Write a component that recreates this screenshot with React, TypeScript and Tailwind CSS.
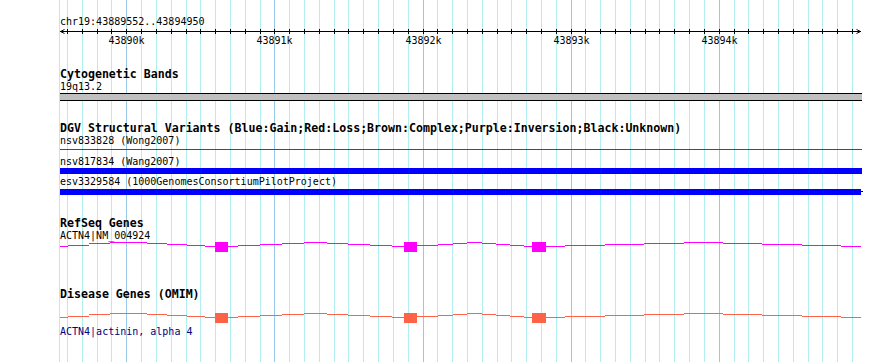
import React from "react";

const W = 890;
const px = (bp: number) => Math.floor(126.8 + (bp - 43890000) * 0.1481);

const minor: number[] = [];
for (let bp = 43889600; bp <= 43894900; bp += 100) minor.push(bp);
const majors = [43890000, 43891000, 43892000, 43893000, 43894000];

const segs: [number, number, number][] = [
  [60, 68, 246], [68, 89, 245], [89, 110, 243], [110, 147, 242], [147, 167, 243], [167, 187, 244], [187, 205, 245], [205, 215, 246],
  [228, 238, 246], [238, 260, 245], [260, 282, 244], [282, 304, 243], [304, 327, 242], [327, 348, 243], [348, 370, 244], [370, 392, 245], [392, 404, 246],
  [417, 438, 245], [438, 453, 244], [453, 467, 243], [467, 482, 242], [482, 496, 243], [496, 510, 244], [510, 524, 245], [524, 532, 246],
  [546, 565, 246], [565, 605, 245], [605, 644, 244], [644, 684, 243], [684, 723, 242], [723, 762, 243], [762, 802, 244], [802, 841, 245], [841, 861, 246],
];
const exons: [number, number][] = [[215, 228], [404, 417], [532, 546]];

function Gene({ color, h, lineOff, boxTop }: { color: string; h: number; lineOff: number; boxTop: number }) {
  return (
    <svg width={W} height={h} className="block" shapeRendering="crispEdges">
      {segs.map(([a, b, y], i) => (
        <rect key={i} x={a} y={y - lineOff} width={b - a} height={1} fill={color} />
      ))}
      {exons.map(([a, b], i) => (
        <rect key={"e" + i} x={a} y={boxTop} width={b - a} height={10} fill={color} />
      ))}
    </svg>
  );
}

const small = "h-[12px] leading-[11px] text-[10px] pl-[60px] whitespace-pre text-black";
const bold = "h-[13px] leading-[13px] text-[11.6px] font-bold pl-[60px] whitespace-pre text-black";

export default function App() {
  return (
    <div className="relative w-[890px] h-[362px] overflow-hidden bg-white font-['DejaVu_Sans_Mono',monospace]">
      <svg width={W} height={362} className="absolute inset-0" shapeRendering="crispEdges">
        <rect x={59} y={0} width={1} height={362} fill="#b0eef0" />
        {minor.map((bp) => (
          <rect key={bp} x={px(bp)} y={0} width={1} height={362} fill={bp % 1000 === 0 ? "#98c8e6" : "#b0eef0"} />
        ))}
      </svg>
      <div className="relative flex flex-col">
        <div className="h-[16px]" />
        <div className={small}>chr19:43889552..43894950</div>
        <svg width={W} height={20} className="block">
          <g shapeRendering="crispEdges">
            <rect x={60} y={3} width={801} height={1} fill="#000" />
            {minor.map((bp) => (
              <rect key={bp} x={px(bp)} y={1} width={1} height={5} fill="#000" />
            ))}
          </g>
          <path d="M64.5 1.5 L60.5 3.5 L64.5 5.5" fill="none" stroke="#000" strokeWidth={1} />
          <path d="M856.5 1.5 L860.5 3.5 L856.5 5.5" fill="none" stroke="#000" strokeWidth={1} />
          {majors.map((bp) => (
            <text key={bp} x={px(bp) + 0.5} y={16} textAnchor="middle" fontSize={10} fontFamily="DejaVu Sans Mono, monospace" fill="#000">
              {bp / 1000 + "k"}
            </text>
          ))}
        </svg>
        <div className="h-[20px]" />
        <div className={bold}>Cytogenetic Bands</div>
        <div className={small}>19q13.2</div>
        <svg width={W} height={8} className="block" shapeRendering="crispEdges">
          <rect x={60} y={0} width={802} height={8} fill="#000" />
          <rect x={60} y={1} width={802} height={6} fill="#c0c0c0" />
        </svg>
        <div className="h-[21px]" />
        <div className={bold}>DGV Structural Variants (Blue:Gain;Red:Loss;Brown:Complex;Purple:Inversion;Black:Unknown)</div>
        <div className={small}>nsv833828 (Wong2007)</div>
        <svg width={W} height={9} className="block" shapeRendering="crispEdges">
          <rect x={60} y={2} width={802} height={1} fill="#ff0000" />
        </svg>
        <div className={small}>nsv817834 (Wang2007)</div>
        <svg width={W} height={6} className="block" shapeRendering="crispEdges">
          <rect x={60} y={0} width={802} height={6} fill="#0000ff" />
        </svg>
        <div className="h-[2px]" />
        <div className={small}>esv3329584 (1000GenomesConsortiumPilotProject)</div>
        <div className="h-[1px]" />
        <svg width={W} height={6} className="block" shapeRendering="crispEdges">
          <rect x={60} y={0} width={801} height={6} fill="#0000ff" />
          <rect x={861} y={2} width={2} height={1} fill="#000" />
        </svg>
        <div className="h-[22px]" />
        <div className={bold}>RefSeq Genes</div>
        <div className={small}>ACTN4|NM_004924</div>
        <Gene color="#ff00ff" h={10} lineOff={242} boxTop={0} />
        <div className="h-[36px]" />
        <div className={bold}>Disease Genes (OMIM)</div>
        <Gene color="#ff6347" h={25} lineOff={230} boxTop={12} />
        <div className={small + " !text-[#000080]"}>ACTN4|actinin, alpha 4</div>
      </div>
    </div>
  );
}
